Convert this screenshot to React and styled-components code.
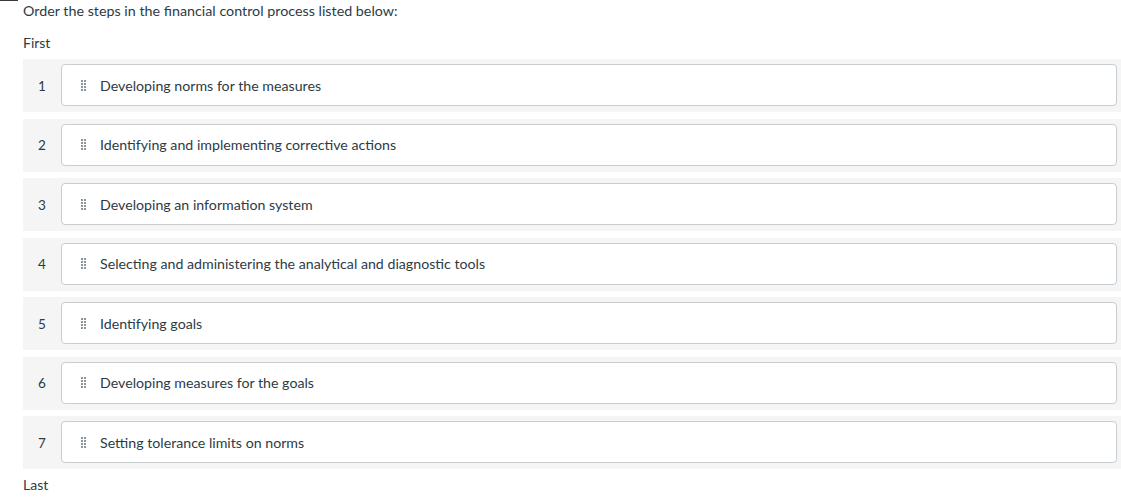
import React from "react";
import styled, { createGlobalStyle } from "styled-components";

const GlobalStyle = createGlobalStyle`
  html, body {
    margin: 0;
    padding: 0;
    background: #ffffff;
  }
  body {
    font-family: Lato, "Noto Sans", "Liberation Sans", sans-serif;
    color: #2d3b45;
  }
`;

const steps = [
  "Developing norms for the measures",
  "Identifying and implementing corrective actions",
  "Developing an information system",
  "Selecting and administering the analytical and diagnostic tools",
  "Identifying goals",
  "Developing measures for the goals",
  "Setting tolerance limits on norms",
];

const App = () => {
  return (
    <>
      <GlobalStyle />
      <TopMark />
      <Question>
        <Prompt>Order the steps in the financial control process listed below:</Prompt>
        <EndLabel>First</EndLabel>
        <List>
          {steps.map((step, i) => (
            <Row key={step}>
              <Number>{i + 1}</Number>
              <Item>
                <Handle>
                  {Array.from({ length: 8 }).map((_, d) => (
                    <Dot key={d} />
                  ))}
                </Handle>
                <ItemText>{step}</ItemText>
              </Item>
            </Row>
          ))}
        </List>
        <EndLabel $last>Last</EndLabel>
      </Question>
    </>
  );
};

const TopMark = styled.div`
  position: absolute;
  top: 0;
  left: 0;
  width: 18px;
  height: 1px;
  background: #3a3a3a;
`;

const Question = styled.div`
  padding-left: 23px;
  padding-top: 1px;
`;

const Prompt = styled.p`
  margin: 0;
  font-size: 14.3px;
  line-height: 20px;
`;

const EndLabel = styled.div`
  font-size: 14px;
  line-height: 20px;
  margin-top: ${(p) => (p.$last ? "6px" : "12px")};
  margin-bottom: ${(p) => (p.$last ? "0" : "6px")};
`;

const List = styled.div`
  display: flex;
  flex-direction: column;
  gap: 6.5px;
`;

const Row = styled.div`
  display: flex;
  align-items: center;
  background: #f5f5f5;
  padding: 5px 4px 6px 0;
`;

const Number = styled.div`
  width: 38px;
  flex-shrink: 0;
  text-align: center;
  font-size: 13.5px;
  padding-top: 1px;
`;

const Item = styled.div`
  flex: 1;
  display: flex;
  align-items: center;
  height: 40px;
  background: #ffffff;
  border: 1px solid #c7cdd1;
  border-radius: 4px;
  padding-left: 19px;
`;

const Handle = styled.div`
  display: grid;
  grid-template-columns: repeat(2, 2px);
  grid-auto-rows: 2px;
  column-gap: 1px;
  row-gap: 1px;
  margin-right: 14px;
`;

const Dot = styled.span`
  background: #8a959c;
  width: 2px;
  height: 2px;
`;

const ItemText = styled.span`
  font-size: 14.2px;
  line-height: 18px;
  padding-top: 1px;
`;

export default App;
